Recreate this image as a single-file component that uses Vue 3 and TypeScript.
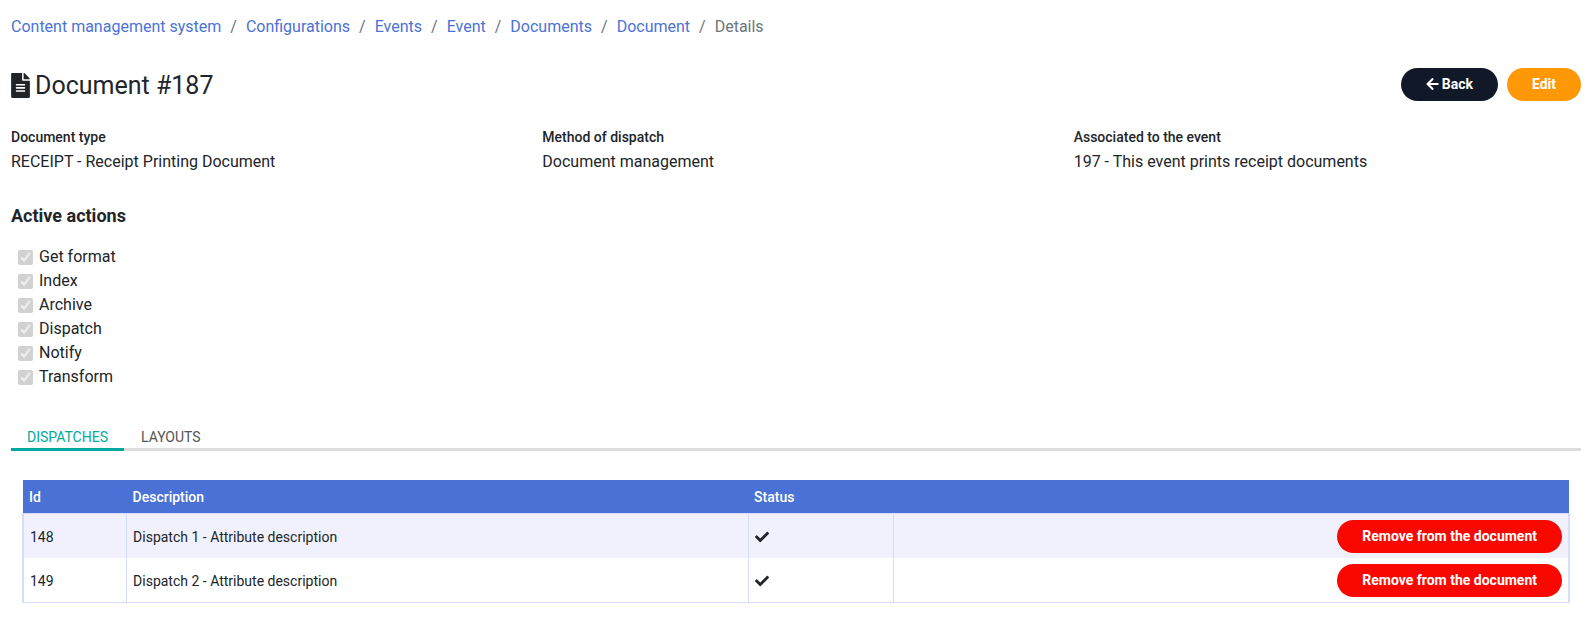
<script setup lang="ts">
import { ref } from 'vue'

interface Dispatch {
  id: number
  description: string
  active: boolean
}

const crumbs: string[] = ['Content management system', 'Configurations', 'Events', 'Event', 'Documents', 'Document']

const fields = [
  { label: 'Document type', value: 'RECEIPT - Receipt Printing Document' },
  { label: 'Method of dispatch', value: 'Document management' },
  { label: 'Associated to the event', value: '197 - This event prints receipt documents' },
]

const actions: string[] = ['Get format', 'Index', 'Archive', 'Dispatch', 'Notify', 'Transform']

const tabs = ['Dispatches', 'Layouts'] as const
const activeTab = ref<(typeof tabs)[number]>('Dispatches')

const dispatches = ref<Dispatch[]>([
  { id: 148, description: 'Dispatch 1 - Attribute description', active: true },
  { id: 149, description: 'Dispatch 2 - Attribute description', active: true },
])

function remove(id: number) {
  dispatches.value = dispatches.value.filter((d) => d.id !== id)
}
</script>

<template>
  <main class="page">
    <nav aria-label="Breadcrumb">
      <ol class="breadcrumb">
        <li v-for="crumb in crumbs" :key="crumb"><a href="#">{{ crumb }}</a></li>
        <li aria-current="page">Details</li>
      </ol>
    </nav>

    <header class="heading">
      <h1>
        <svg class="file-icon" viewBox="0 0 384 512" aria-hidden="true">
          <path d="M224 136V0H24C10.700 0 0 10.700 0 24v464c0 13.300 10.700 24 24 24h336c13.300 0 24-10.700 24-24V160H248c-13.200 0-24-10.800-24-24zm64 236c0 6.600-5.400 12-12 12H108c-6.600 0-12-5.400-12-12v-8c0-6.600 5.400-12 12-12h168c6.600 0 12 5.400 12 12v8zm0-64c0 6.600-5.400 12-12 12H108c-6.600 0-12-5.400-12-12v-8c0-6.600 5.400-12 12-12h168c6.600 0 12 5.400 12 12v8zm0-72v8c0 6.600-5.400 12-12 12H108c-6.600 0-12-5.400-12-12v-8c0-6.600 5.400-12 12-12h168c6.600 0 12 5.400 12 12zm96-114.100v6.100H256V0h6.100c6.400 0 12.500 2.500 17 7l97.900 98c4.500 4.500 7 10.600 7 16.900z" />
        </svg>
        Document #187
      </h1>
      <div class="buttons">
        <button type="button" class="btn dark">
          <svg class="arrow-icon" viewBox="0 0 448 512" aria-hidden="true">
            <path d="M257.500 445.100l-22.200 22.200c-9.400 9.400-24.600 9.400-33.900 0L7 273c-9.400-9.400-9.400-24.600 0-33.900L201.400 44.700c9.400-9.400 24.600-9.400 33.900 0l22.200 22.200c9.500 9.500 9.300 25-.4 34.300L136.600 216H424c13.300 0 24 10.700 24 24v32c0 13.300-10.700 24-24 24H136.600l120.500 114.800c9.800 9.300 10 24.800.4 34.300z" />
          </svg>
          Back
        </button>
        <button type="button" class="btn orange">Edit</button>
      </div>
    </header>

    <dl class="fields">
      <div v-for="field in fields" :key="field.label">
        <dt>{{ field.label }}</dt>
        <dd>{{ field.value }}</dd>
      </div>
    </dl>

    <section>
      <h2>Active actions</h2>
      <ul class="actions">
        <li v-for="action in actions" :key="action">
          <label><input type="checkbox" checked disabled />{{ action }}</label>
        </li>
      </ul>
    </section>

    <div class="tabs" role="tablist">
      <button
        v-for="tab in tabs"
        :key="tab"
        type="button"
        role="tab"
        class="tab"
        :class="{ active: tab === activeTab }"
        :aria-selected="tab === activeTab"
        @click="activeTab = tab"
      >
        {{ tab }}
      </button>
    </div>

    <div v-if="activeTab === 'Dispatches'" class="panel" role="tabpanel">
      <table>
        <colgroup>
          <col class="col-id" />
          <col class="col-description" />
          <col class="col-status" />
          <col />
        </colgroup>
        <thead>
          <tr>
            <th scope="col">Id</th>
            <th scope="col">Description</th>
            <th scope="col">Status</th>
            <th></th>
          </tr>
        </thead>
        <tbody>
          <tr v-for="item in dispatches" :key="item.id">
            <td>{{ item.id }}</td>
            <td>{{ item.description }}</td>
            <td>
              <svg v-if="item.active" class="check-icon" viewBox="0 0 512 512" role="img" aria-label="Active">
                <path d="M173.900 439.400l-166.400-166.400c-10-10-10-26.200 0-36.200l36.200-36.200c10-10 26.200-10 36.200 0L192 312.700 432.100 72.600c10-10 26.200-10 36.200 0l36.200 36.200c10 10 10 26.200 0 36.200l-294.400 294.400c-10 10-26.200 10-36.200 0z" />
              </svg>
            </td>
            <td class="row-action">
              <button type="button" class="btn red" @click="remove(item.id)">Remove from the document</button>
            </td>
          </tr>
        </tbody>
      </table>
    </div>
  </main>
</template>

<style>
body {
  margin: 0;
  background: #fff;
}
</style>

<style scoped>
.page {
  box-sizing: border-box;
  padding: 15px 8px 32px 11px;
  font-family: Roboto, "Liberation Sans", sans-serif;
  font-size: 16px;
  line-height: 24px;
  color: #212529;
}

h1,
h2,
dl,
dd,
ol,
ul {
  margin: 0;
  padding: 0;
  list-style: none;
}

svg {
  fill: currentColor;
}

.breadcrumb {
  display: flex;
  flex-wrap: wrap;
  color: #6c757d;
}

.breadcrumb li + li::before {
  content: "/";
  padding: 0 9px;
}

.breadcrumb a {
  color: #4c72d6;
  text-decoration: none;
}

.heading {
  display: flex;
  align-items: flex-start;
  justify-content: space-between;
  margin-top: 29px;
}

h1 {
  display: flex;
  align-items: center;
  gap: 5px;
  font-size: 25px;
  font-weight: 400;
  line-height: 35px;
}

.file-icon {
  width: 19px;
  height: 25px;
}

.buttons {
  display: flex;
  gap: 9px;
}

.btn {
  display: inline-flex;
  align-items: center;
  gap: 3px;
  height: 33px;
  padding: 0 25px 2px;
  border: 0;
  border-radius: 17px;
  font-family: inherit;
  font-size: 14px;
  font-weight: 700;
  color: #fff;
  white-space: nowrap;
  cursor: pointer;
}

.dark {
  background: #111827;
}

.orange {
  background: #ff9807;
}

.red {
  background: #f80800;
}

.arrow-icon {
  width: 13px;
  height: 14px;
}

.fields {
  display: grid;
  grid-template-columns: repeat(3, 1fr);
  gap: 24px;
  margin-top: 22px;
}

dt {
  font-size: 14px;
  font-weight: 500;
}

dd {
  line-height: 26px;
}

h2 {
  margin-top: 29px;
  font-size: 18px;
  font-weight: 700;
}

.actions {
  margin-top: 17px;
}

.actions label {
  display: flex;
  align-items: center;
  gap: 6px;
  padding-left: 7px;
}

.actions input {
  width: 15px;
  height: 15px;
  margin: 0;
}

.tabs {
  display: flex;
  gap: 1px;
  margin-top: 37px;
  box-shadow: inset 0 -3px #ddd;
}

.tab {
  padding: 0 16px;
  border: 0;
  border-bottom: 3px solid transparent;
  background: none;
  font-family: inherit;
  font-size: 14px;
  line-height: 22px;
  text-transform: uppercase;
  color: #555;
  cursor: pointer;
}

.tab.active {
  border-color: #00a99d;
  color: #00a99d;
}

.panel {
  padding: 29px 11px 0;
}

table {
  width: 100%;
  border-collapse: collapse;
  table-layout: fixed;
  font-size: 14px;
}

.col-id {
  width: 6.7%;
}

.col-description {
  width: 40.2%;
}

.col-status {
  width: 9.4%;
}

th {
  height: 33px;
  padding: 0 6px;
  background: #4a72d6;
  font-weight: 500;
  line-height: 20px;
  text-align: left;
  color: #fff;
}

tbody {
  border: 2px solid #d6dcfa;
  border-width: 1px 2px;
}

td {
  padding: 6px 6px 5px;
  border-left: 1px solid #d6dcfa;
  line-height: 20px;
}

td:first-child {
  border-left-width: 2px;
}

tbody tr:nth-child(odd) {
  background: #f1f1fe;
}

.check-icon {
  display: block;
  width: 14px;
  height: 14px;
}

.row-action .btn {
  display: flex;
  margin-left: auto;
}
</style>
